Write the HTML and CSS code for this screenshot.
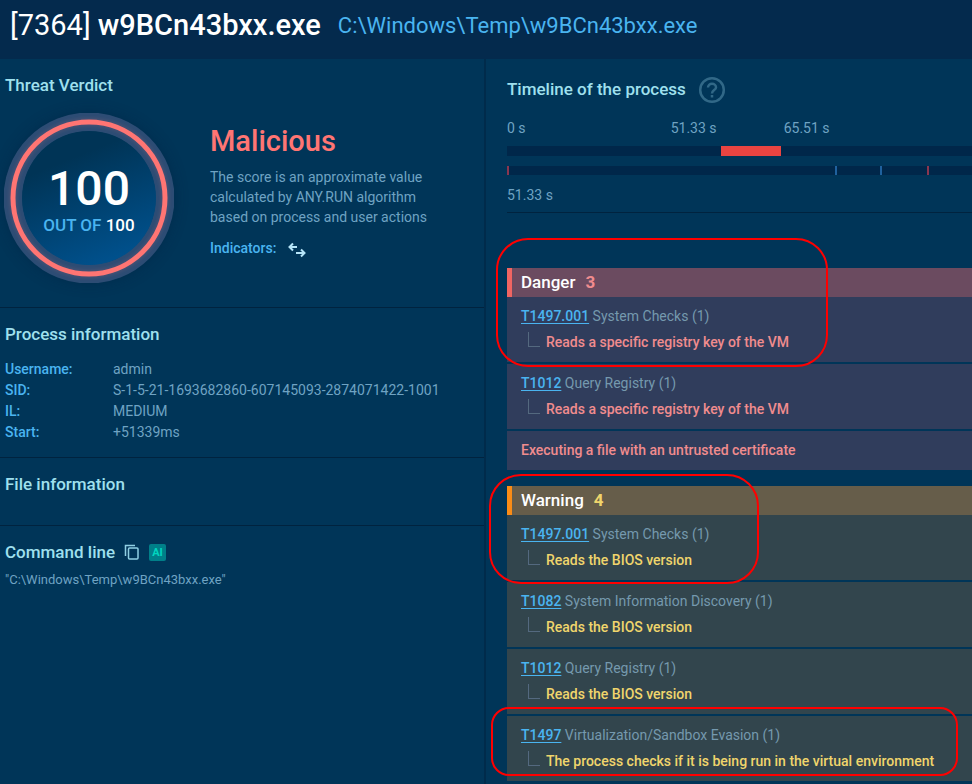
FILE: index.html
```html
<!DOCTYPE html>
<html lang="en">
<head>
    <meta charset="UTF-8">
    <meta name="viewport" content="width=device-width, initial-scale=1.0">
    <title>Process details - w9BCn43bxx.exe</title>
    <link rel="stylesheet" href="styles.css">
</head>
<body>

<header class="page-header">
    <h1><span class="pid">[7364]</span> w9BCn43bxx.exe</h1>
    <span class="path">C:\Windows\Temp\w9BCn43bxx.exe</span>
</header>

<div class="layout">
    <!-- Left column -->
    <div class="info">
        <section class="info-section">
            <h2>Threat Verdict</h2>
            <div class="verdict">
                <div class="score">
                    <svg class="score-ring" viewBox="0 0 170 170" aria-hidden="true">
                        <defs>
                            <linearGradient id="disc" x1="0.3" y1="0" x2="0.7" y2="1">
                                <stop offset="0.2" stop-color="#003456"/>
                                <stop offset="1" stop-color="#00528f"/>
                            </linearGradient>
                            <filter id="glow" x="-20%" y="-20%" width="140%" height="140%">
                                <feGaussianBlur stdDeviation="2"/>
                            </filter>
                        </defs>
                        <circle cx="85" cy="85" r="76" fill="none" stroke="#2c4c74" stroke-width="19"/>
                        <circle cx="85" cy="85" r="67" fill="url(#disc)"/>
                        <circle cx="85" cy="85" r="76" fill="none" stroke="#ff7373" stroke-opacity="0.2" stroke-width="6" filter="url(#glow)"/>
                        <circle cx="85" cy="85" r="76" fill="none" stroke="#ff7573" stroke-width="5"/>
                    </svg>
                    <div class="score-text">
                        <span class="score-value">100</span>
                        <span class="score-max">OUT OF <b>100</b></span>
                    </div>
                </div>
                <div class="verdict-text">
                    <h3>Malicious</h3>
                    <p>The score is an approximate value calculated by ANY.RUN algorithm based on process and user actions</p>
                    <div class="indicators">
                        Indicators:
                        <svg width="18" height="16" viewBox="0 0 18 16" fill="none" stroke="#b5e4f7" stroke-width="2" aria-hidden="true">
                            <path d="M9 5H2M5 1.5L1.5 5L5 8.5M8 11H16M13 7.5L16.5 11L13 14.5"/>
                        </svg>
                    </div>
                </div>
            </div>
        </section>

        <section class="info-section">
            <h2>Process information</h2>
            <dl>
                <dt>Username:</dt><dd>admin</dd>
                <dt>SID:</dt><dd>S-1-5-21-1693682860-607145093-2874071422-1001</dd>
                <dt>IL:</dt><dd>MEDIUM</dd>
                <dt>Start:</dt><dd>+51339ms</dd>
            </dl>
        </section>

        <section class="info-section file-info">
            <h2>File information</h2>
        </section>

        <section class="info-section">
            <div class="title-row">
                <h2>Command line</h2>
                <button type="button" class="copy" aria-label="Copy">
                    <svg width="16" height="16" viewBox="0 0 16 16" fill="none" stroke="#8fcfe3" stroke-width="1.5">
                        <path d="M1.5 12V1.5H11"/>
                        <rect x="4.5" y="4" width="9.5" height="11" rx="1"/>
                    </svg>
                </button>
                <button type="button" class="ai">AI</button>
            </div>
            <p class="command">"C:\Windows\Temp\w9BCn43bxx.exe"</p>
        </section>
    </div>

    <!-- Right column -->
    <div class="activity">
        <section class="timeline">
            <div class="title-row">
                <h2>Timeline of the process</h2>
                <button type="button" class="help" aria-label="Help">
                    <svg width="28" height="28" viewBox="0 0 28 28" fill="none" stroke="#316887" stroke-width="2.5">
                        <circle cx="14" cy="14" r="11.8"/>
                        <path d="M10 11.6C10 9.4 11.7 7.8 14 7.8S18 9.4 18 11.4C18 14 14 14.2 14 17.4"/>
                        <path d="M14 19V21.5"/>
                    </svg>
                </button>
            </div>
            <div class="times">
                <span style="width: 35.2%">0 s</span>
                <span style="width: 24.3%">51.33 s</span>
                <span>65.51 s</span>
            </div>
            <div class="track">
                <div class="lifetime" style="left: 46%; width: 13%"></div>
            </div>
            <div class="track events">
                <i class="tick red" style="left: 0"></i>
                <i class="tick blue" style="left: 70.6%"></i>
                <i class="tick blue" style="left: 80.3%"></i>
                <i class="tick red" style="left: 90.4%"></i>
            </div>
            <div class="start">51.33 s</div>
        </section>

        <section class="group danger">
            <h3>Danger <span>3</span></h3>
            <div class="item">
                <p><a href="#">T1497.001</a> System Checks (1)</p>
                <p class="event">Reads a specific registry key of the VM</p>
            </div>
            <div class="item">
                <p><a href="#">T1012</a> Query Registry (1)</p>
                <p class="event">Reads a specific registry key of the VM</p>
            </div>
            <div class="item">
                <p class="plain">Executing a file with an untrusted certificate</p>
            </div>
            <div class="mark mark-danger"></div>
        </section>

        <section class="group warning">
            <h3>Warning <span>4</span></h3>
            <div class="item">
                <p><a href="#">T1497.001</a> System Checks (1)</p>
                <p class="event">Reads the BIOS version</p>
            </div>
            <div class="item">
                <p><a href="#">T1082</a> System Information Discovery (1)</p>
                <p class="event">Reads the BIOS version</p>
            </div>
            <div class="item">
                <p><a href="#">T1012</a> Query Registry (1)</p>
                <p class="event">Reads the BIOS version</p>
            </div>
            <div class="item">
                <p><a href="#">T1497</a> Virtualization/Sandbox Evasion (1)</p>
                <p class="event">The process checks if it is being run in the virtual environment</p>
                <div class="mark mark-evasion"></div>
            </div>
            <div class="mark mark-warning"></div>
        </section>
    </div>
</div>

</body>
</html>
```
FILE: styles.css
```css
* {
    box-sizing: border-box;
}
body {
    font-family: Roboto, sans-serif;
    font-size: 14px;
    line-height: 20px;
    background-color: #003558;
    color: #6fa3c3;
    margin: 0;
}
h1, h2, h3, p, dl, dd {
    margin: 0;
}
button {
    font-family: inherit;
    border: none;
    background: none;
    padding: 0;
    cursor: pointer;
}
svg {
    display: block;
}

.page-header {
    display: flex;
    align-items: center;
    gap: 17px;
    padding: 7px 10px 16px;
    background-color: #042a4d;
    white-space: nowrap;
}
h1 {
    font-size: 29px;
    line-height: 36px;
    font-weight: 500;
    color: #fff;
}
.pid {
    font-weight: 400;
}
.path {
    padding-top: 2px;
    font-size: 22px;
    color: #4ab4f0;
}
h2 {
    font-size: 17px;
    line-height: 20px;
    font-weight: 500;
    color: #9fe0ee;
}
.title-row {
    display: flex;
    align-items: center;
}

.layout {
    display: grid;
    grid-template-columns: minmax(0, 1fr) minmax(0, 1fr);
    overflow: hidden;
}

/* Left column */
.info {
    border-right: 2px solid #002b4b;
}
.info-section {
    padding: 16px 5px 14px;
    border-bottom: 1px solid #00233f;
}
.info-section:last-child {
    border-bottom: none;
}
.verdict {
    display: flex;
    gap: 36px;
    margin: 18px 0 0 -1px;
    padding-bottom: 10px;
}
.score {
    display: grid;
    flex: none;
    place-items: center;
    width: 170px;
    height: 170px;
    border-radius: 50%;
    box-shadow: 0 0 14px rgba(0, 30, 60, 0.4);
}
.score-ring, .score-text {
    grid-area: 1 / 1;
}
.score-ring {
    width: 100%;
}
.score-text {
    display: flex;
    flex-direction: column;
    align-items: center;
    padding-top: 4px;
}
.score-value {
    font-size: 48px;
    line-height: 50px;
    font-weight: 500;
    color: #fff;
}
.score-max {
    font-size: 17px;
    line-height: 22px;
    font-weight: 500;
    color: #4ab4f0;
}
.score-max b {
    font-weight: 500;
    color: #fff;
}
.verdict-text {
    max-width: 230px;
    padding-top: 13px;
}
.verdict-text h3 {
    margin-bottom: 11px;
    font-size: 29px;
    line-height: 30px;
    font-weight: 500;
    color: #ff7573;
}
.indicators {
    display: flex;
    align-items: center;
    gap: 12px;
    margin-top: 11px;
    font-weight: 500;
    color: #4ab4f0;
}
.indicators svg {
    margin-top: 3px;
}
dl {
    display: grid;
    grid-template-columns: 108px 1fr;
    margin-top: 15px;
    line-height: 21px;
}
dt {
    font-weight: 500;
    color: #4ab4f0;
}
.file-info {
    padding-bottom: 31px;
}
.copy {
    margin-left: 9px;
}
.ai {
    width: 17px;
    height: 17px;
    margin-left: 9px;
    border-radius: 2px;
    background-color: #007f89;
    color: #00d5bf;
    font-size: 11px;
    font-weight: 700;
    line-height: 17px;
}
.command {
    margin-top: 8px;
    font-size: 13px;
}

/* Right column */
.activity {
    padding: 17px 0 3px 21px;
}
.timeline {
    padding-bottom: 7px;
    border-bottom: 1px solid #00233f;
}
.timeline h2 {
    padding-bottom: 2px;
    line-height: 22px;
}
.help {
    margin-left: 12px;
}
.times {
    display: flex;
    margin: 14px 0 8px;
}
.track {
    position: relative;
    height: 10px;
    background-color: #00274a;
}
.events {
    height: 9px;
    margin-top: 10px;
}
.lifetime {
    position: absolute;
    height: 100%;
    background-color: #e94441;
}
.tick {
    position: absolute;
    width: 2px;
    height: 100%;
}
.red {
    background-color: #8a3650;
}
.blue {
    background-color: #1f619e;
}
.start {
    margin-top: 10px;
}

.group {
    position: relative;
    margin-top: 16px;
}
.timeline + .group {
    margin-top: 55px;
}
.group h3 {
    display: flex;
    gap: 10px;
    padding: 0 9px 1px;
    border-left: 5px solid;
    font-size: 17px;
    line-height: 28px;
    font-weight: 500;
    color: #fff;
}
.group h3 span {
    font-weight: 700;
}
.danger h3 {
    border-color: #f06562;
    background-color: #6b4b60;
}
.warning h3 {
    border-color: #fa8c16;
    background-color: #665d4a;
}
.item {
    position: relative;
    padding: 9px 14px 10px;
    color: #7599ae;
    white-space: nowrap;
}
.item + .item {
    margin-top: 2px;
}
.danger .item {
    background-color: #303d5c;
}
.warning .item {
    background-color: #32454d;
}
.item a {
    font-weight: 500;
    color: #4ab4f0;
    text-underline-offset: 2px;
}
.event, .plain {
    font-weight: 500;
}
.event {
    display: flex;
    gap: 6px;
    margin-top: 6px;
}
.event::before {
    content: "";
    width: 11px;
    height: 14px;
    margin-left: 7px;
    border: solid #54697f;
    border-width: 0 0 1px 1px;
}
.danger h3 span, .danger .event, .danger .plain {
    color: #f08c8e;
}
.warning h3 span, .warning .event {
    color: #f0d56c;
}

/* Red outlines over the important findings */
.mark {
    position: absolute;
    border: 2px solid #f00;
    border-radius: 32px;
    pointer-events: none;
}
.mark-danger {
    top: -30px;
    left: -11px;
    width: 332px;
    height: 129px;
}
.mark-warning {
    top: -12px;
    left: -18px;
    width: 270px;
    height: 110px;
}
.mark-evasion {
    z-index: 1;
    top: -9px;
    left: -16px;
    width: 467px;
    height: 69px;
    border-radius: 18px;
}
```
